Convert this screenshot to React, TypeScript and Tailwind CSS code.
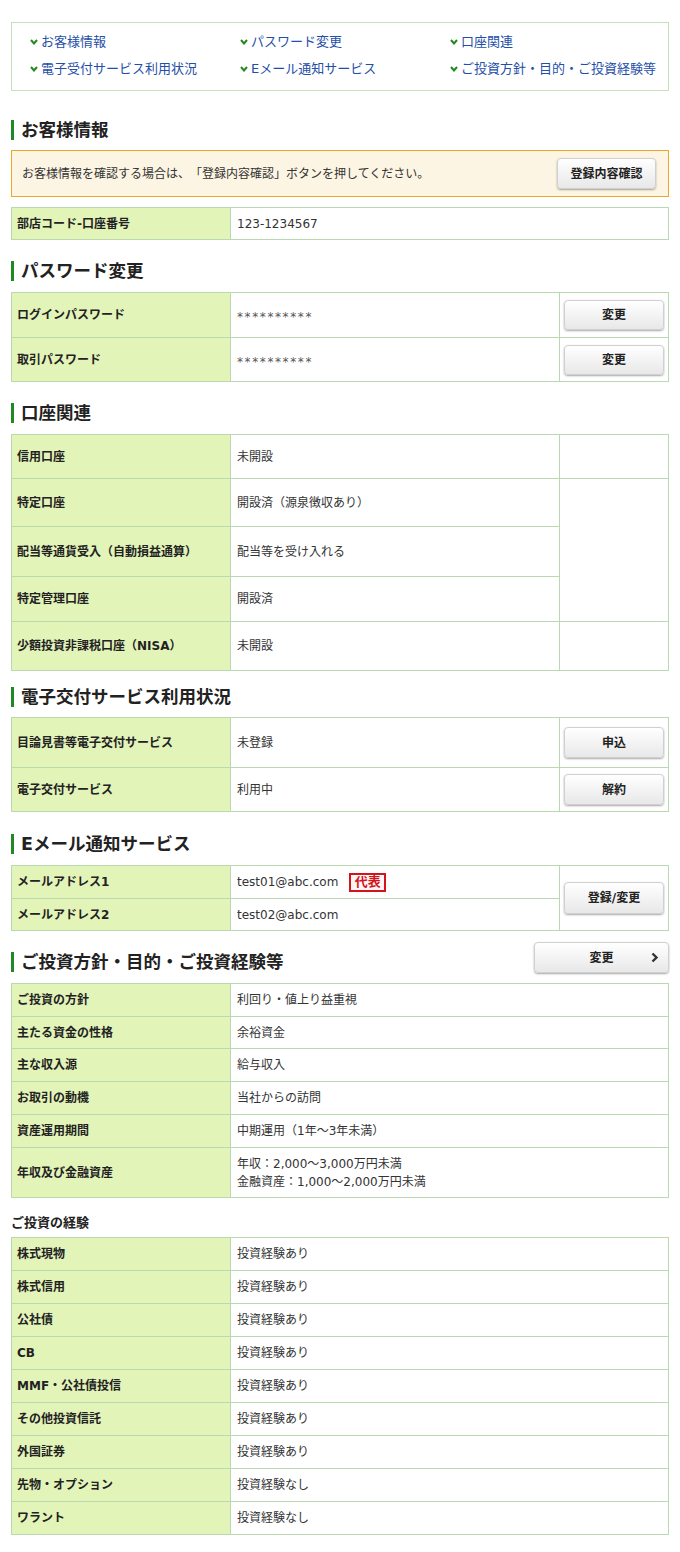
import type { ReactNode } from "react";

const navItems = [
  "お客様情報",
  "パスワード変更",
  "口座関連",
  "電子受付サービス利用状況",
  "Eメール通知サービス",
  "ご投資方針・目的・ご投資経験等",
];

function Chevron() {
  return (
    <svg width="8" height="6" viewBox="0 0 8 6" className="shrink-0">
      <polyline points="1,1 4,4.5 7,1" fill="none" stroke="#25881f" strokeWidth="2" />
    </svg>
  );
}

function Heading({ children, className = "" }: { children: ReactNode; className?: string }) {
  return (
    <h2 className={`flex h-[22px] items-center gap-[7px] text-[17.5px] font-bold text-[#222] ${className}`}>
      <span className="h-[20px] w-[3px] bg-[#1f8a23]" />
      {children}
    </h2>
  );
}

function Btn({ children, className = "" }: { children: ReactNode; className?: string }) {
  return (
    <button
      className={`relative flex items-center justify-center rounded-[4px] border border-[#d0d0d0] bg-linear-to-b from-white to-[#e8e8e8] text-[12px] font-bold text-[#222] shadow-[0_1px_2px_rgba(0,0,0,0.35)] ${className}`}
    >
      {children}
    </button>
  );
}

function Label({ children, className = "" }: { children: ReactNode; className?: string }) {
  return (
    <div className={`flex items-center bg-[#e3f4b9] pl-[5px] text-[12px] font-bold text-[#222] ${className}`}>
      {children}
    </div>
  );
}

function Value({ children, className = "" }: { children?: ReactNode; className?: string }) {
  return <div className={`flex items-center bg-white pl-[6px] text-[12px] text-[#333] ${className}`}>{children}</div>;
}

function Action({ children, className = "" }: { children?: ReactNode; className?: string }) {
  return <div className={`flex items-center justify-center bg-white ${className}`}>{children}</div>;
}

function Masked() {
  return <span className="relative top-[2px] tracking-[1.6px] text-[#555]">**********</span>;
}

const two = "grid grid-cols-[218px_1fr] gap-px bg-[#bad9b0] p-px";
const three = "grid grid-cols-[218px_328px_108px] gap-px bg-[#bad9b0] p-px";

const policy: [string, ReactNode, string][] = [
  ["ご投資の方針", "利回り・値上り益重視", "h-[32px]"],
  ["主たる資金の性格", "余裕資金", "h-[31px]"],
  ["主な収入源", "給与収入", "h-[32px]"],
  ["お取引の動機", "当社からの訪問", "h-[32px]"],
  ["資産運用期間", "中期運用（1年～3年未満）", "h-[32px]"],
  [
    "年収及び金融資産",
    <div className="leading-[18px]">
      <div>年収：2,000～3,000万円未満</div>
      <div>金融資産：1,000～2,000万円未満</div>
    </div>,
    "h-[49px]",
  ],
];

const experience: [string, string][] = [
  ["株式現物", "投資経験あり"],
  ["株式信用", "投資経験あり"],
  ["公社債", "投資経験あり"],
  ["CB", "投資経験あり"],
  ["MMF・公社債投信", "投資経験あり"],
  ["その他投資信託", "投資経験あり"],
  ["外国証券", "投資経験あり"],
  ["先物・オプション", "投資経験なし"],
  ["ワラント", "投資経験なし"],
];

export default function App() {
  return (
    <div className="min-h-[1552px] bg-white px-[11px] pt-[22px] pb-[17px] font-['DejaVu_Sans','Noto_Sans_CJK_JP',sans-serif] text-[#333] [text-spacing-trim:space-all]">
      <nav className="grid grid-cols-[210px_210px_1fr] gap-y-[9px] border border-[#c4e0bc] pt-[10px] pb-[12px] pl-[18px]">
        {navItems.map((t) => (
          <a key={t} className="flex h-[18px] items-center gap-[3px] text-[13px] text-[#1f4fa8]">
            <Chevron />
            {t}
          </a>
        ))}
      </nav>

      <Heading className="mt-[28px] mb-[9px]">お客様情報</Heading>
      <div className="flex h-[47px] items-center justify-between border border-[#e9a825] bg-[#fdf5e3] pr-[12px] pl-[10px] text-[12px] text-[#333]">
        <span>お客様情報を確認する場合は、「登録内容確認」ボタンを押してください。</span>
        <Btn className="h-[31px] w-[99px]">登録内容確認</Btn>
      </div>
      <div className={`mt-[10px] ${two}`}>
        <Label className="h-[31px]">部店コード-口座番号</Label>
        <Value>123-1234567</Value>
      </div>

      <Heading className="mt-[20px] mb-[10px]">パスワード変更</Heading>
      <div className={three}>
        <Label className="h-[44px]">ログインパスワード</Label>
        <Value>
          <Masked />
        </Value>
        <Action>
          <Btn className="h-[30px] w-[100px]">変更</Btn>
        </Action>
        <Label className="h-[43px]">取引パスワード</Label>
        <Value>
          <Masked />
        </Value>
        <Action>
          <Btn className="h-[30px] w-[100px]">変更</Btn>
        </Action>
      </div>

      <Heading className="mt-[20px] mb-[10px]">口座関連</Heading>
      <div className={three}>
        <Label className="h-[43px]">信用口座</Label>
        <Value>未開設</Value>
        <Action />
        <Label className="h-[47px]">特定口座</Label>
        <Value>開設済（源泉徴収あり）</Value>
        <Action className="row-span-3" />
        <Label className="h-[49px]">配当等通貨受入（自動損益通算）</Label>
        <Value>配当等を受け入れる</Value>
        <Label className="h-[44px]">特定管理口座</Label>
        <Value>開設済</Value>
        <Label className="h-[48px]">少額投資非課税口座（NISA）</Label>
        <Value>未開設</Value>
        <Action />
      </div>

      <Heading className="mt-[15px] mb-[9px]">電子交付サービス利用状況</Heading>
      <div className={three}>
        <Label className="h-[49px]">目論見書等電子交付サービス</Label>
        <Value>未登録</Value>
        <Action>
          <Btn className="h-[31px] w-[100px]">申込</Btn>
        </Action>
        <Label className="h-[43px]">電子交付サービス</Label>
        <Value>利用中</Value>
        <Action>
          <Btn className="h-[31px] w-[100px]">解約</Btn>
        </Action>
      </div>

      <Heading className="mt-[21px] mb-[10px]">Eメール通知サービス</Heading>
      <div className={three}>
        <Label className="h-[32px]">メールアドレス1</Label>
        <Value className="gap-[11px]">
          test01@abc.com
          <span className="flex h-[19px] w-[37px] items-center justify-center border-2 border-[#d4141b] bg-[#fff6f6] text-[13px] font-bold text-[#d4141b]">
            代表
          </span>
        </Value>
        <Action className="row-span-2">
          <Btn className="h-[32px] w-[100px]">登録/変更</Btn>
        </Action>
        <Label className="h-[31px]">メールアドレス2</Label>
        <Value>test02@abc.com</Value>
      </div>

      <div className="mt-[11px] mb-[10px] flex items-end justify-between">
        <Heading>ご投資方針・目的・ご投資経験等</Heading>
        <Btn className="h-[31px] w-[135px]">
          変更
          <svg width="8" height="11" viewBox="0 0 8 11" className="absolute right-[9px]">
            <polyline points="1.5,1.5 5.5,5.5 1.5,9.5" fill="none" stroke="#333" strokeWidth="2.4" />
          </svg>
        </Btn>
      </div>
      <div className={two}>
        {policy.map(([l, v, h]) => (
          <div key={l} className="contents">
            <Label className={h}>{l}</Label>
            <Value>{v}</Value>
          </div>
        ))}
      </div>

      <h3 className="mt-[16px] mb-[5px] flex h-[18px] items-center text-[13px] font-bold text-[#222]">ご投資の経験</h3>
      <div className={two}>
        {experience.map(([l, v]) => (
          <div key={l} className="contents">
            <Label className="h-[32px]">{l}</Label>
            <Value>{v}</Value>
          </div>
        ))}
      </div>
    </div>
  );
}
